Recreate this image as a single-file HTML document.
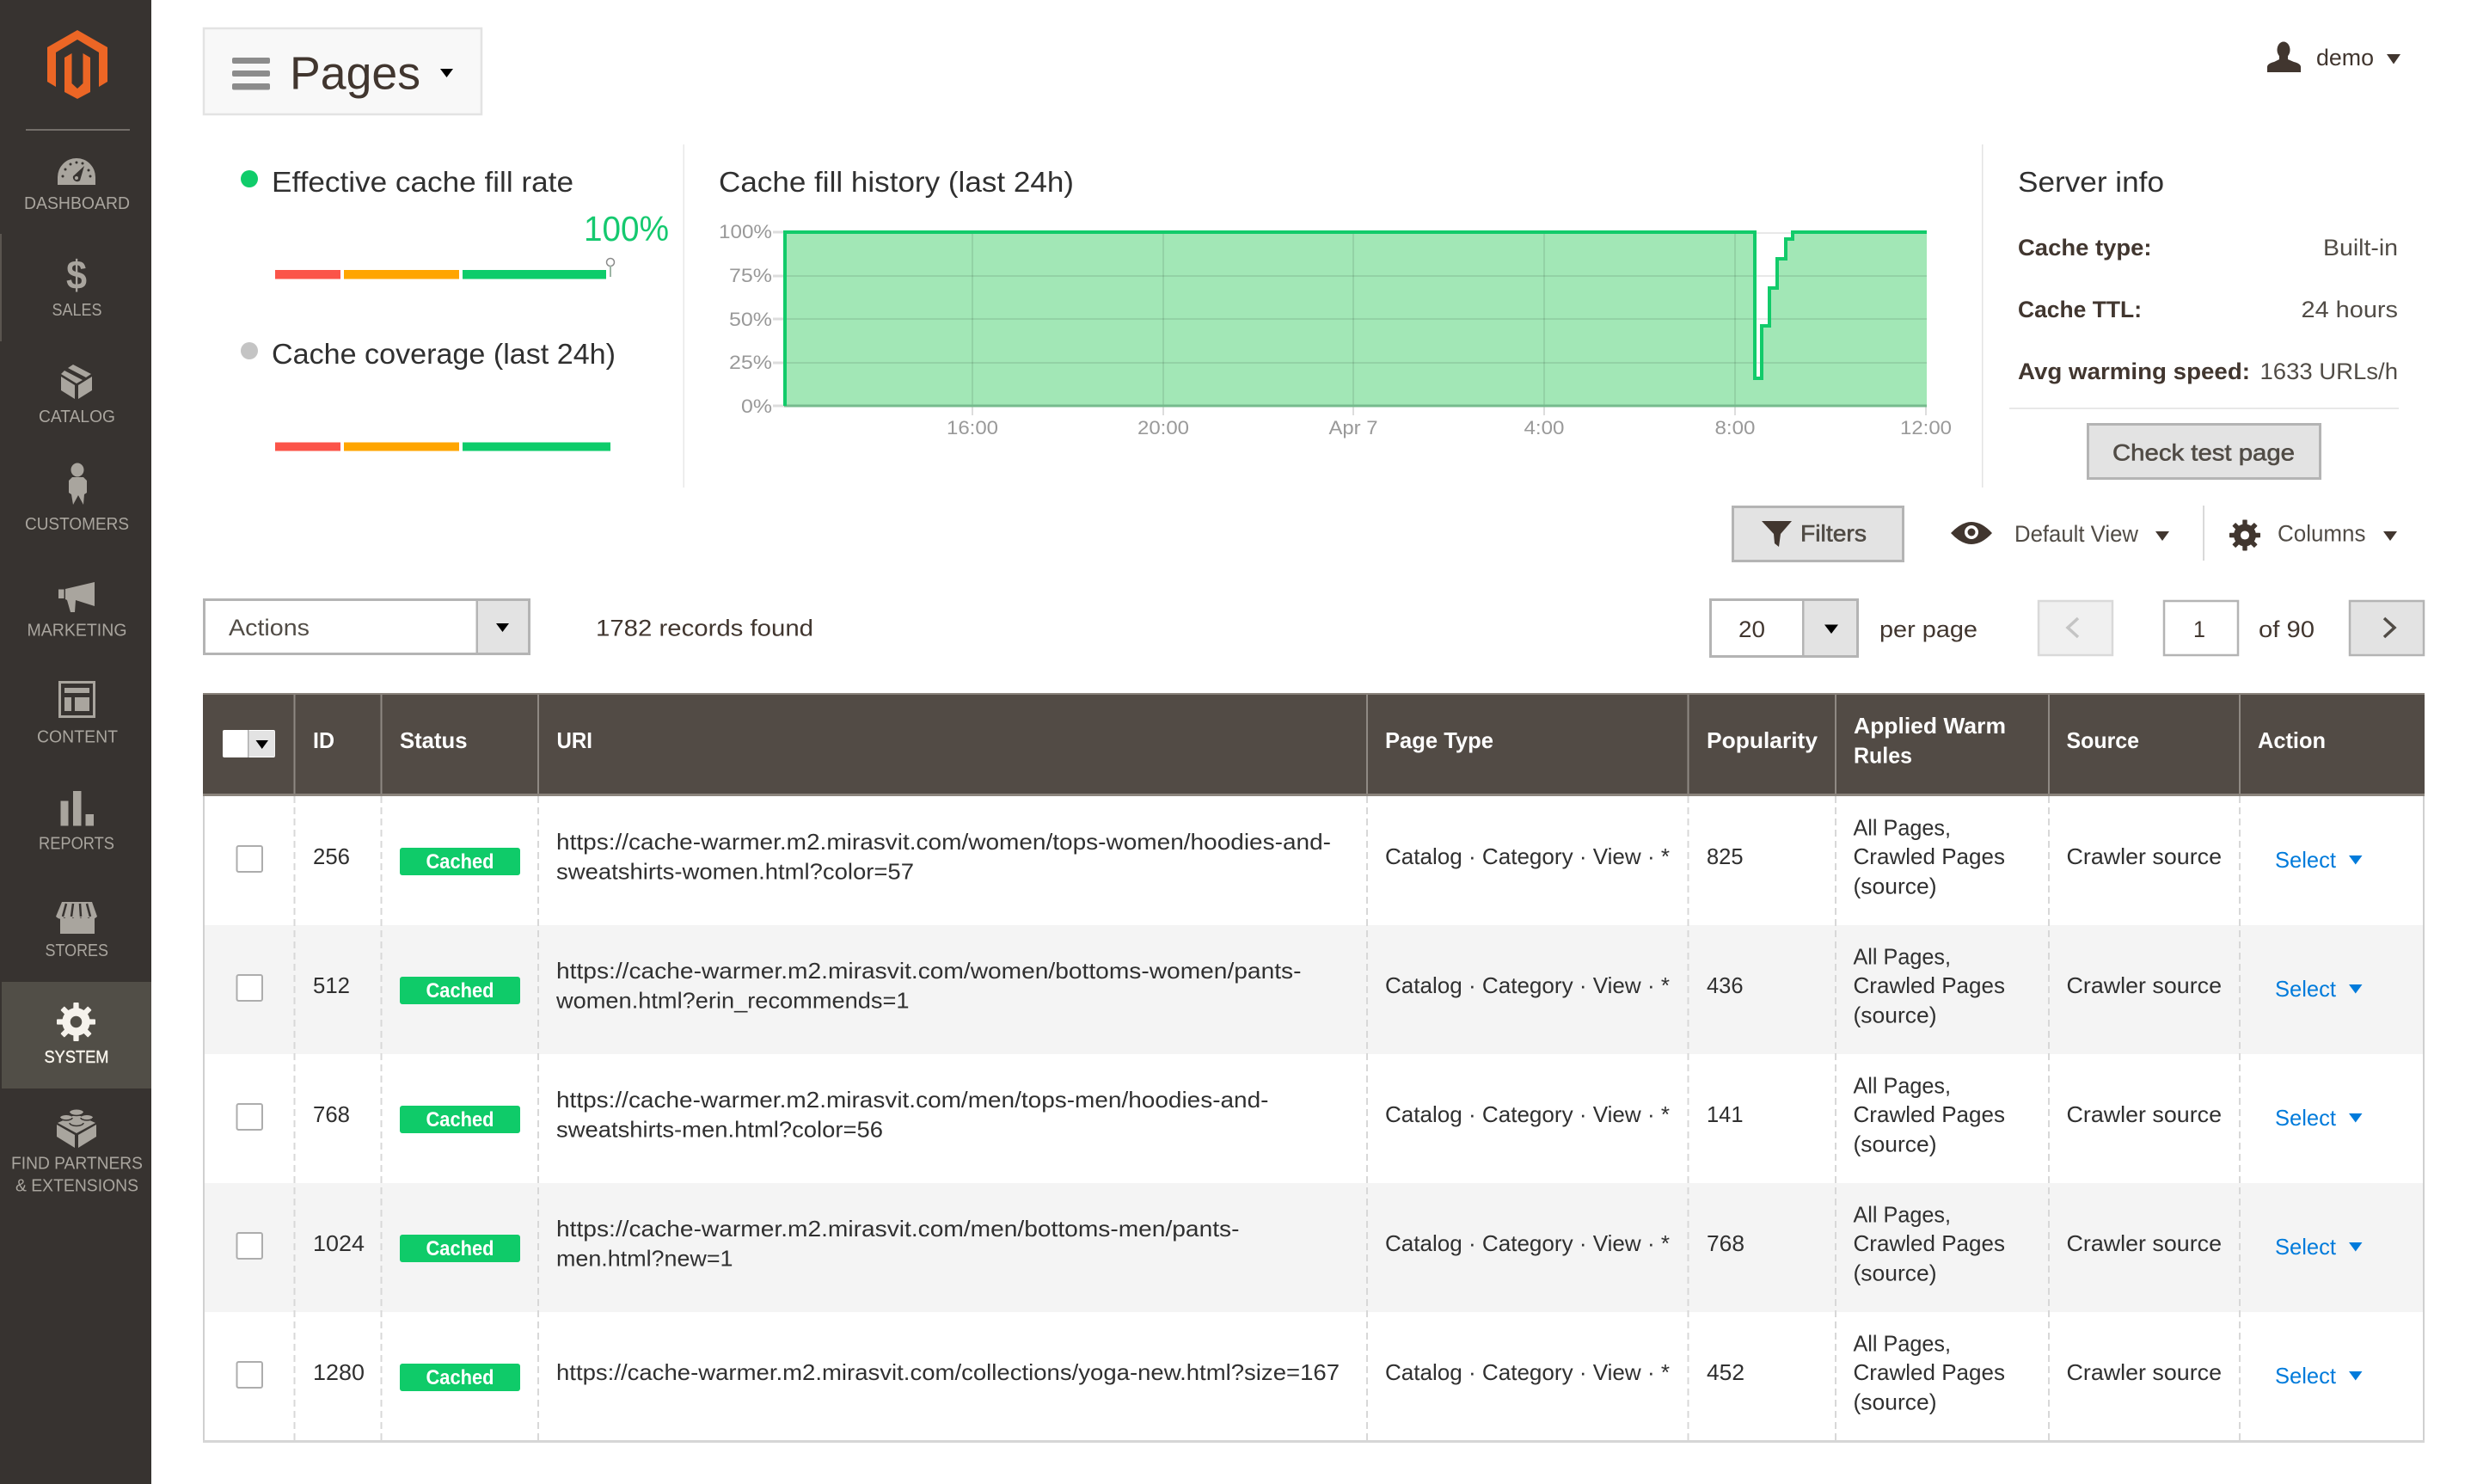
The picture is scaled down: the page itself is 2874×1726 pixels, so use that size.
<!DOCTYPE html>
<html lang="en">
<head>
<meta charset="utf-8">
<title>Pages</title>
<style>
html,body{margin:0;padding:0;background:#fff;width:2874px;height:1726px;overflow:hidden}
svg{display:block}
text{font-family:"Liberation Sans",Arial,sans-serif;fill:#303030;font-size:26px}
.n{fill:#a9a59e;font-size:20px}
.h{font-size:33px}
.b{font-weight:700;fill:#41362f;font-size:27px}
.g{fill:#41362f;font-size:27px}
.sb{fill:#514c46;font-size:27px;stroke:#514c46;stroke-width:.6px}
.ax{fill:#999;font-size:22px}
.th{fill:#fff;font-weight:700;font-size:26px}
.c{fill:#fff;font-weight:700;font-size:24px}
.s{fill:#007bdb;font-size:26px}
</style>
</head>
<body>
<svg xmlns="http://www.w3.org/2000/svg" width="2874" height="1726" viewBox="0 0 2874 1726">
<rect width="2874" height="1726" fill="#fff"/>

<!-- sidebar -->
<rect width="176" height="1726" fill="#373330"/>
<rect x="0" y="272" width="2" height="125" fill="#5a554f"/>
<rect x="2" y="1142" width="174" height="124" fill="#514e47"/>
<polygon points="90,35 125,55 125,95 115,101 115,61 90,46 65,61 65,101 55,95 55,55" fill="#ec6625"/>
<polygon points="75,67 83.500,62 83.500,97 90,103 96.500,97 96.500,62 105,67 105,107 90,115 75,107" fill="#ec6625"/>
<rect x="30" y="150" width="121" height="2" fill="#736e69"/>

<!-- dashboard -->
<path d="M67 215V206A22 22 0 0 1 111 206V215Z" fill="#a9a59e"/>
<path d="M98 193L93 210A5 5 0 0 1 85 205Z" fill="#373330"/>
<circle cx="89" cy="207" r="2" fill="#a9a59e"/>
<g fill="#373330"><circle cx="73" cy="205" r="1.500"/><circle cx="76" cy="197" r="1.500"/><circle cx="82" cy="191" r="1.500"/><circle cx="89" cy="189" r="1.500"/><circle cx="96" cy="190" r="1.500"/><circle cx="105" cy="205" r="1.500"/><circle cx="103" cy="198" r="1.500"/></g>
<text class="n" x="28" y="243" textLength="123" lengthAdjust="spacingAndGlyphs">DASHBOARD</text>

<!-- sales -->
<text x="77" y="336" textLength="24" lengthAdjust="spacingAndGlyphs" style="font-size:47px;font-weight:700;fill:#a9a59e">$</text>
<text class="n" x="60.500" y="367" textLength="58" lengthAdjust="spacingAndGlyphs">SALES</text>

<!-- catalog -->
<g fill="#a9a59e">
<polygon points="71,438 87,448 87,464 71,454"/>
<polygon points="91,448 107,438 107,454 91,464"/>
<polygon points="85,424 106,435 100,439 79,428"/>
<polygon points="75,431 96,442 89,446 71,435"/>
</g>
<text class="n" x="45" y="491" textLength="89" lengthAdjust="spacingAndGlyphs">CATALOG</text>

<!-- customers -->
<ellipse cx="90" cy="546.500" rx="7.500" ry="8" fill="#a9a59e"/>
<path d="M84 555H97L101 559V573L98 575L97 587L91 576L85 587L83 575L80 573V559Z" fill="#a9a59e"/>
<text class="n" x="29" y="616" textLength="121" lengthAdjust="spacingAndGlyphs">CUSTOMERS</text>

<!-- marketing -->
<g fill="#a9a59e">
<rect x="68" y="685.500" width="6.500" height="10.500"/>
<polygon points="76,685 110,677 110,705 88,698 87,712 82,712 78,698 76,697"/>
</g>
<text class="n" x="31.500" y="739.500" textLength="116" lengthAdjust="spacingAndGlyphs">MARKETING</text>

<!-- content -->
<rect x="69.500" y="793.500" width="40" height="40" fill="none" stroke="#a9a59e" stroke-width="3"/>
<g fill="#a9a59e">
<rect x="75" y="800" width="29" height="6"/>
<rect x="75" y="811" width="8" height="16"/>
<rect x="87" y="811" width="17" height="16"/>
</g>
<text class="n" x="43" y="863.500" textLength="94" lengthAdjust="spacingAndGlyphs">CONTENT</text>

<!-- reports -->
<g fill="#a9a59e">
<rect x="70.500" y="931.500" width="9" height="29"/>
<rect x="85" y="920" width="9.500" height="40.500"/>
<rect x="99.500" y="947" width="9.500" height="13.500"/>
</g>
<text class="n" x="45" y="987.500" textLength="88" lengthAdjust="spacingAndGlyphs">REPORTS</text>

<!-- stores -->
<rect x="70" y="1068" width="40" height="18" fill="#a9a59e"/>
<path d="M72 1049H107L113 1066Q108 1071 103 1067Q98 1071 94 1067Q89 1071 85 1067Q80 1071 75 1067Q70 1071 65 1066Z" fill="#a9a59e"/>
<path d="M77 1051L73 1066M85 1051L83 1066M93 1051L94 1066M101 1051L105 1066" stroke="#373330" stroke-width="2.500" fill="none"/>
<text class="n" x="52.500" y="1112" textLength="73.500" lengthAdjust="spacingAndGlyphs">STORES</text>

<!-- system -->
<g transform="translate(88.500,1188.500) scale(.225)" fill="#f5f2ec">
<circle r="72"/>
<rect x="-14" y="-100" width="28" height="200" rx="4"/>
<rect x="-14" y="-100" width="28" height="200" rx="4" transform="rotate(45)"/>
<rect x="-14" y="-100" width="28" height="200" rx="4" transform="rotate(90)"/>
<rect x="-14" y="-100" width="28" height="200" rx="4" transform="rotate(135)"/>
<circle r="30" fill="#514e47"/>
</g>
<text class="n" x="51.500" y="1236" textLength="75" lengthAdjust="spacingAndGlyphs" style="fill:#f7f3eb;stroke:#f7f3eb;stroke-width:.4px">SYSTEM</text>

<!-- partners -->
<g fill="#a9a59e">
<polygon points="66,1308 87,1320 87,1335 66,1322"/>
<polygon points="91,1320 112,1308 112,1322 91,1335"/>
<polygon points="89,1296 111,1306 89,1318 67,1306"/>
<ellipse cx="89" cy="1294" rx="8" ry="3.500"/>
<ellipse cx="77" cy="1300" rx="7" ry="3"/>
<ellipse cx="101" cy="1300" rx="7" ry="3"/>
<ellipse cx="89" cy="1306" rx="8" ry="3.500"/>
</g>
<path d="M81 1306A8 3.500 0 0 0 97 1306M70 1300A7 3 0 0 0 84 1300M94 1300A7 3 0 0 0 108 1300M81 1294A8 3.500 0 0 0 97 1294" stroke="#373330" stroke-width="1.500" fill="none"/>
<text class="n" x="13" y="1359.500" textLength="153" lengthAdjust="spacingAndGlyphs">FIND PARTNERS</text>
<text class="n" x="18" y="1385.500" textLength="143" lengthAdjust="spacingAndGlyphs">&amp; EXTENSIONS</text>

<!-- title -->
<rect x="237" y="33" width="323" height="100" fill="#f8f8f8" stroke="#e3e3e3" stroke-width="2.500"/>
<g fill="#8c8c8c"><rect x="270" y="67" width="44" height="7" rx="2"/><rect x="270" y="82" width="44" height="7" rx="2"/><rect x="270" y="97" width="44" height="7.500" rx="2"/></g>
<text x="337" y="103.500" textLength="152" lengthAdjust="spacingAndGlyphs" style="font-size:54px;fill:#41362f">Pages</text>
<polygon points="512,80 527,80 519.500,90" fill="#000"/>

<!-- user -->
<ellipse cx="2656" cy="58" rx="7.500" ry="9.500" fill="#41362f"/>
<path d="M2637 84V78Q2637 74 2645 72L2651 69V64H2661V69L2668 72Q2676 74 2676 78V84Z" fill="#41362f"/>
<text class="g" x="2694" y="76" textLength="67" lengthAdjust="spacingAndGlyphs">demo</text>
<polygon points="2776,63 2792,63 2784,74.500" fill="#41362f"/>

<!-- left stats -->
<circle cx="290" cy="208" r="10" fill="#10cc6a"/>
<text class="h" x="316" y="223" textLength="351" lengthAdjust="spacingAndGlyphs">Effective cache fill rate</text>
<text x="679" y="280" textLength="99" lengthAdjust="spacingAndGlyphs" style="font-size:41px;fill:#15c96f">100%</text>
<rect x="320" y="314" width="76" height="10.500" fill="#fb5449"/>
<rect x="400" y="314" width="134" height="10.500" fill="#ffa500"/>
<rect x="538" y="314" width="167" height="10.500" fill="#0dcc6a"/>
<circle cx="710" cy="305" r="4.500" fill="#fff" stroke="#8a8a8a" stroke-width="1.500"/>
<rect x="709" y="309" width="2" height="13" fill="#9db5a5"/>
<circle cx="290" cy="408" r="10" fill="#c4c4c4"/>
<text class="h" x="316" y="423" textLength="400" lengthAdjust="spacingAndGlyphs">Cache coverage (last 24h)</text>
<rect x="320" y="514.500" width="76" height="10" fill="#fb5449"/>
<rect x="400" y="514.500" width="134" height="10" fill="#ffa500"/>
<rect x="538" y="514.500" width="172" height="10" fill="#0dcc6a"/>
<rect x="794.500" y="168" width="1.500" height="399" fill="#e8e8e8"/>

<!-- chart -->
<text class="h" x="836" y="223" textLength="413" lengthAdjust="spacingAndGlyphs">Cache fill history (last 24h)</text>
<polygon points="912,472 912,270 2041,270 2041,440 2049,440 2049,379 2058,379 2058,335 2067,335 2067,301 2077,301 2077,278 2085,278 2085,270 2241,270 2241,472" fill="#a2e7b6"/>
<g stroke="#000" stroke-opacity=".09" stroke-width="2">
<path d="M912 321H2241M912 371H2241M912 422H2241"/>
<path d="M2041 271H2085"/>
<path d="M1131 272V472M1353 272V472M1574 272V472M1796 272V472M2018 272V472"/>
</g>
<path d="M1131 473V483M1353 473V483M1574 473V483M1796 473V483M2018 473V483M2240 473V483" stroke="#ddd" stroke-width="2"/>
<path d="M899 270H912M899 321H912M899 371H912M899 422H912M899 472H912" stroke="#ddd" stroke-width="3"/>
<rect x="912" y="470.500" width="1329" height="3" fill="#76ba8d"/>
<path d="M913 472V270H2041V440H2049V379H2058V335H2067V301H2077V278H2085V270H2241" fill="none" stroke="#12cb6a" stroke-width="4"/>
<text class="ax" x="836" y="277" textLength="62" lengthAdjust="spacingAndGlyphs">100%</text>
<text class="ax" x="848" y="328" textLength="50" lengthAdjust="spacingAndGlyphs">75%</text>
<text class="ax" x="848" y="379" textLength="50" lengthAdjust="spacingAndGlyphs">50%</text>
<text class="ax" x="848" y="429" textLength="50" lengthAdjust="spacingAndGlyphs">25%</text>
<text class="ax" x="862" y="480" textLength="36" lengthAdjust="spacingAndGlyphs">0%</text>
<text class="ax" x="1101" y="505" textLength="60" lengthAdjust="spacingAndGlyphs">16:00</text>
<text class="ax" x="1323" y="505" textLength="60" lengthAdjust="spacingAndGlyphs">20:00</text>
<text class="ax" x="1545.500" y="505" textLength="57" lengthAdjust="spacingAndGlyphs">Apr 7</text>
<text class="ax" x="1772.500" y="505" textLength="47" lengthAdjust="spacingAndGlyphs">4:00</text>
<text class="ax" x="1994.500" y="505" textLength="47" lengthAdjust="spacingAndGlyphs">8:00</text>
<text class="ax" x="2210" y="505" textLength="60" lengthAdjust="spacingAndGlyphs">12:00</text>

<!-- server info -->
<rect x="2305" y="168" width="1.500" height="399" fill="#e3e3e3"/>
<text class="h" x="2347" y="223" textLength="170" lengthAdjust="spacingAndGlyphs">Server info</text>
<text class="b" x="2347" y="297" textLength="155.500" lengthAdjust="spacingAndGlyphs">Cache type:</text>
<text class="g" x="2702" y="297" textLength="87" lengthAdjust="spacingAndGlyphs" style="fill:#514c46">Built-in</text>
<text class="b" x="2347" y="369" textLength="144" lengthAdjust="spacingAndGlyphs">Cache TTL:</text>
<text class="g" x="2676.500" y="369" textLength="112.500" lengthAdjust="spacingAndGlyphs" style="fill:#514c46">24 hours</text>
<text class="b" x="2347" y="441" textLength="270" lengthAdjust="spacingAndGlyphs">Avg warming speed:</text>
<text class="g" x="2628.500" y="441" textLength="160.500" lengthAdjust="spacingAndGlyphs" style="fill:#514c46">1633 URLs/h</text>
<rect x="2337" y="474" width="453" height="2" fill="#e8e8e8"/>
<rect x="2428.500" y="493.500" width="270" height="63" fill="#e3e3e3" stroke="#b4b4b4" stroke-width="3"/>
<text class="sb" x="2457" y="535.500" textLength="212" lengthAdjust="spacingAndGlyphs">Check test page</text>

<!-- toolbar -->
<rect x="2015.500" y="589.500" width="198" height="63" fill="#e3e3e3" stroke="#b4b4b4" stroke-width="3"/>
<polygon points="2049,606 2084,606 2071,621 2069,636 2064,632 2063,621" fill="#41362f"/>
<text class="sb" x="2094" y="629.500" textLength="77" lengthAdjust="spacingAndGlyphs">Filters</text>
<path d="M2269 620Q2293 594 2317 620Q2293 646 2269 620Z" fill="#41362f"/>
<circle cx="2293" cy="619" r="8" fill="#fff"/>
<circle cx="2293" cy="619" r="4.500" fill="#41362f"/>
<text class="g" x="2343" y="630" textLength="144" lengthAdjust="spacingAndGlyphs" style="fill:#514c46">Default View</text>
<polygon points="2507,618 2523,618 2515,629" fill="#41362f"/>
<rect x="2562" y="588" width="2" height="64" fill="#d9d9d9"/>
<g transform="translate(2611,622.500) scale(.18)" fill="#41362f">
<circle r="72"/>
<rect x="-15" y="-100" width="30" height="200" rx="4"/>
<rect x="-15" y="-100" width="30" height="200" rx="4" transform="rotate(45)"/>
<rect x="-15" y="-100" width="30" height="200" rx="4" transform="rotate(90)"/>
<rect x="-15" y="-100" width="30" height="200" rx="4" transform="rotate(135)"/>
<circle r="28" fill="#fff"/>
</g>
<text class="g" x="2649" y="629.500" textLength="102.500" lengthAdjust="spacingAndGlyphs" style="fill:#514c46">Columns</text>
<polygon points="2772,618 2788,618 2780,629" fill="#41362f"/>

<!-- actions -->
<rect x="237.500" y="697.500" width="378" height="63" fill="#fff" stroke="#b4b4b4" stroke-width="3"/>
<rect x="555" y="699" width="59" height="60" fill="#e3e3e3"/>
<rect x="553.500" y="699" width="2.500" height="60" fill="#b4b4b4"/>
<polygon points="577,725 592,725 584.500,735" fill="#000"/>
<text class="g" x="266" y="739" textLength="94" lengthAdjust="spacingAndGlyphs" style="fill:#514c46">Actions</text>
<text class="g" x="693" y="739.500" textLength="253" lengthAdjust="spacingAndGlyphs">1782 records found</text>

<!-- pager -->
<rect x="1989.500" y="697.500" width="171" height="66" fill="#fff" stroke="#b4b4b4" stroke-width="3"/>
<rect x="2097" y="699" width="62" height="63" fill="#e3e3e3"/>
<rect x="2096" y="699" width="2.500" height="63" fill="#b4b4b4"/>
<polygon points="2122,726.500 2138,726.500 2130,737" fill="#000"/>
<text class="g" x="2022" y="741" textLength="31" lengthAdjust="spacingAndGlyphs">20</text>
<text class="g" x="2186" y="741" textLength="114" lengthAdjust="spacingAndGlyphs">per page</text>
<rect x="2371" y="699" width="86" height="63" fill="#f0f0f0" stroke="#d9d9d9" stroke-width="2.500"/>
<polyline points="2417,719 2405,730 2417,741" fill="none" stroke="#c4c4c4" stroke-width="3.500"/>
<rect x="2517" y="699" width="86" height="63" fill="#fff" stroke="#b4b4b4" stroke-width="2.500"/>
<text class="g" x="2551" y="741" textLength="14" lengthAdjust="spacingAndGlyphs">1</text>
<text class="g" x="2627" y="741" textLength="65" lengthAdjust="spacingAndGlyphs">of 90</text>
<rect x="2733" y="699" width="86" height="63" fill="#e3e3e3" stroke="#b4b4b4" stroke-width="2.500"/>
<polyline points="2773,719 2785,730 2773,741" fill="none" stroke="#514c46" stroke-width="3.500"/>

<!-- table -->
<rect x="238" y="1076" width="2580" height="150" fill="#f4f4f4"/>
<rect x="238" y="1376" width="2580" height="150" fill="#f4f4f4"/>
<rect x="236" y="806" width="2584" height="120" fill="#524b45"/>
<rect x="236" y="806" width="2584" height="2" fill="#8a837c"/>
<rect x="236" y="923" width="2584" height="3" fill="#8a837c"/>
<rect x="236" y="926" width="2" height="752" fill="#d0d0d0"/>
<rect x="2818" y="926" width="2" height="752" fill="#d0d0d0"/>
<rect x="236" y="1675" width="2584" height="3" fill="#d6d6d6"/>
<path d="M342.500 808V923M443.500 808V923M626 808V923M1590 808V923M1963.500 808V923M2135 808V923M2383 808V923M2605 808V923" stroke="#8f8983" stroke-width="2"/>
<path d="M342.500 926V1675M443.500 926V1675M626 926V1675M1590 926V1675M1963.500 926V1675M2135 926V1675M2383 926V1675M2605 926V1675" stroke="#d8d8d8" stroke-width="2" stroke-dasharray="8 5"/>

<rect x="259" y="849" width="61" height="32" rx="2" fill="#fff"/>
<rect x="289" y="850" width="30.500" height="30" fill="#e3e3e3"/>
<rect x="288" y="849" width="1.500" height="32" fill="#adadad"/>
<polygon points="297.500,861 312,861 304.750,871" fill="#000"/>

<text class="th" x="364" y="870" textLength="25" lengthAdjust="spacingAndGlyphs">ID</text>
<text class="th" x="465" y="870" textLength="78.500" lengthAdjust="spacingAndGlyphs">Status</text>
<text class="th" x="647.500" y="870" textLength="41.500" lengthAdjust="spacingAndGlyphs">URI</text>
<text class="th" x="1611" y="870" textLength="126" lengthAdjust="spacingAndGlyphs">Page Type</text>
<text class="th" x="1985" y="870" textLength="129" lengthAdjust="spacingAndGlyphs">Popularity</text>
<text class="th" x="2156" y="853" textLength="177" lengthAdjust="spacingAndGlyphs">Applied Warm</text>
<text class="th" x="2156" y="887.500" textLength="68" lengthAdjust="spacingAndGlyphs">Rules</text>
<text class="th" x="2403.500" y="870" textLength="84.500" lengthAdjust="spacingAndGlyphs">Source</text>
<text class="th" x="2626" y="870" textLength="79" lengthAdjust="spacingAndGlyphs">Action</text>

<!-- row 1 -->
<rect x="275.500" y="984" width="29.500" height="30" rx="2" fill="#fff" stroke="#adadad" stroke-width="2"/>
<text x="364" y="1005" textLength="43" lengthAdjust="spacingAndGlyphs">256</text>
<rect x="465" y="986" width="140" height="32" rx="3" fill="#0fcb69"/>
<text class="c" x="495.500" y="1010" textLength="79" lengthAdjust="spacingAndGlyphs">Cached</text>
<text x="647" y="988" textLength="901" lengthAdjust="spacingAndGlyphs">https://cache-warmer.m2.mirasvit.com/women/tops-women/hoodies-and-</text>
<text x="647" y="1022.500" textLength="416" lengthAdjust="spacingAndGlyphs">sweatshirts-women.html?color=57</text>
<text x="1611" y="1005" textLength="331" lengthAdjust="spacingAndGlyphs">Catalog · Category · View · *</text>
<text x="1985" y="1005" textLength="42.500" lengthAdjust="spacingAndGlyphs">825</text>
<text x="2155.500" y="971.500" textLength="113.500" lengthAdjust="spacingAndGlyphs">All Pages,</text>
<text x="2155.500" y="1005" textLength="176.500" lengthAdjust="spacingAndGlyphs">Crawled Pages</text>
<text x="2155.500" y="1039.500" textLength="97" lengthAdjust="spacingAndGlyphs">(source)</text>
<text x="2403.500" y="1005" textLength="180.500" lengthAdjust="spacingAndGlyphs">Crawler source</text>
<text class="s" x="2646" y="1009" textLength="71" lengthAdjust="spacingAndGlyphs">Select</text>
<polygon points="2732,995 2747.500,995 2739.750,1005.500" fill="#007bdb"/>

<!-- row 2 -->
<rect x="275.500" y="1134" width="29.500" height="30" rx="2" fill="#fff" stroke="#adadad" stroke-width="2"/>
<text x="364" y="1155" textLength="43" lengthAdjust="spacingAndGlyphs">512</text>
<rect x="465" y="1136" width="140" height="32" rx="3" fill="#0fcb69"/>
<text class="c" x="495.500" y="1160" textLength="79" lengthAdjust="spacingAndGlyphs">Cached</text>
<text x="647" y="1138" textLength="866.500" lengthAdjust="spacingAndGlyphs">https://cache-warmer.m2.mirasvit.com/women/bottoms-women/pants-</text>
<text x="647" y="1172.500" textLength="410.500" lengthAdjust="spacingAndGlyphs">women.html?erin_recommends=1</text>
<text x="1611" y="1155" textLength="331" lengthAdjust="spacingAndGlyphs">Catalog · Category · View · *</text>
<text x="1985" y="1155" textLength="42.500" lengthAdjust="spacingAndGlyphs">436</text>
<text x="2155.500" y="1121.500" textLength="113.500" lengthAdjust="spacingAndGlyphs">All Pages,</text>
<text x="2155.500" y="1155" textLength="176.500" lengthAdjust="spacingAndGlyphs">Crawled Pages</text>
<text x="2155.500" y="1189.500" textLength="97" lengthAdjust="spacingAndGlyphs">(source)</text>
<text x="2403.500" y="1155" textLength="180.500" lengthAdjust="spacingAndGlyphs">Crawler source</text>
<text class="s" x="2646" y="1159" textLength="71" lengthAdjust="spacingAndGlyphs">Select</text>
<polygon points="2732,1145 2747.500,1145 2739.750,1155.500" fill="#007bdb"/>

<!-- row 3 -->
<rect x="275.500" y="1284" width="29.500" height="30" rx="2" fill="#fff" stroke="#adadad" stroke-width="2"/>
<text x="364" y="1305" textLength="43" lengthAdjust="spacingAndGlyphs">768</text>
<rect x="465" y="1286" width="140" height="32" rx="3" fill="#0fcb69"/>
<text class="c" x="495.500" y="1310" textLength="79" lengthAdjust="spacingAndGlyphs">Cached</text>
<text x="647" y="1288" textLength="828.500" lengthAdjust="spacingAndGlyphs">https://cache-warmer.m2.mirasvit.com/men/tops-men/hoodies-and-</text>
<text x="647" y="1322.500" textLength="380" lengthAdjust="spacingAndGlyphs">sweatshirts-men.html?color=56</text>
<text x="1611" y="1305" textLength="331" lengthAdjust="spacingAndGlyphs">Catalog · Category · View · *</text>
<text x="1985" y="1305" textLength="42.500" lengthAdjust="spacingAndGlyphs">141</text>
<text x="2155.500" y="1271.500" textLength="113.500" lengthAdjust="spacingAndGlyphs">All Pages,</text>
<text x="2155.500" y="1305" textLength="176.500" lengthAdjust="spacingAndGlyphs">Crawled Pages</text>
<text x="2155.500" y="1339.500" textLength="97" lengthAdjust="spacingAndGlyphs">(source)</text>
<text x="2403.500" y="1305" textLength="180.500" lengthAdjust="spacingAndGlyphs">Crawler source</text>
<text class="s" x="2646" y="1309" textLength="71" lengthAdjust="spacingAndGlyphs">Select</text>
<polygon points="2732,1295 2747.500,1295 2739.750,1305.500" fill="#007bdb"/>

<!-- row 4 -->
<rect x="275.500" y="1434" width="29.500" height="30" rx="2" fill="#fff" stroke="#adadad" stroke-width="2"/>
<text x="364" y="1455" textLength="60" lengthAdjust="spacingAndGlyphs">1024</text>
<rect x="465" y="1436" width="140" height="32" rx="3" fill="#0fcb69"/>
<text class="c" x="495.500" y="1460" textLength="79" lengthAdjust="spacingAndGlyphs">Cached</text>
<text x="647" y="1438" textLength="794.500" lengthAdjust="spacingAndGlyphs">https://cache-warmer.m2.mirasvit.com/men/bottoms-men/pants-</text>
<text x="647" y="1472.500" textLength="205.500" lengthAdjust="spacingAndGlyphs">men.html?new=1</text>
<text x="1611" y="1455" textLength="331" lengthAdjust="spacingAndGlyphs">Catalog · Category · View · *</text>
<text x="1985" y="1455" textLength="44" lengthAdjust="spacingAndGlyphs">768</text>
<text x="2155.500" y="1421.500" textLength="113.500" lengthAdjust="spacingAndGlyphs">All Pages,</text>
<text x="2155.500" y="1455" textLength="176.500" lengthAdjust="spacingAndGlyphs">Crawled Pages</text>
<text x="2155.500" y="1489.500" textLength="97" lengthAdjust="spacingAndGlyphs">(source)</text>
<text x="2403.500" y="1455" textLength="180.500" lengthAdjust="spacingAndGlyphs">Crawler source</text>
<text class="s" x="2646" y="1459" textLength="71" lengthAdjust="spacingAndGlyphs">Select</text>
<polygon points="2732,1445 2747.500,1445 2739.750,1455.500" fill="#007bdb"/>

<!-- row 5 -->
<rect x="275.500" y="1584" width="29.500" height="30" rx="2" fill="#fff" stroke="#adadad" stroke-width="2"/>
<text x="364" y="1605" textLength="60" lengthAdjust="spacingAndGlyphs">1280</text>
<rect x="465" y="1586" width="140" height="32" rx="3" fill="#0fcb69"/>
<text class="c" x="495.500" y="1610" textLength="79" lengthAdjust="spacingAndGlyphs">Cached</text>
<text x="647" y="1605" textLength="911" lengthAdjust="spacingAndGlyphs">https://cache-warmer.m2.mirasvit.com/collections/yoga-new.html?size=167</text>
<text x="1611" y="1605" textLength="331" lengthAdjust="spacingAndGlyphs">Catalog · Category · View · *</text>
<text x="1985" y="1605" textLength="44" lengthAdjust="spacingAndGlyphs">452</text>
<text x="2155.500" y="1571.500" textLength="113.500" lengthAdjust="spacingAndGlyphs">All Pages,</text>
<text x="2155.500" y="1605" textLength="176.500" lengthAdjust="spacingAndGlyphs">Crawled Pages</text>
<text x="2155.500" y="1639.500" textLength="97" lengthAdjust="spacingAndGlyphs">(source)</text>
<text x="2403.500" y="1605" textLength="180.500" lengthAdjust="spacingAndGlyphs">Crawler source</text>
<text class="s" x="2646" y="1609" textLength="71" lengthAdjust="spacingAndGlyphs">Select</text>
<polygon points="2732,1595 2747.500,1595 2739.750,1605.500" fill="#007bdb"/>
</svg>
</body>
</html>
